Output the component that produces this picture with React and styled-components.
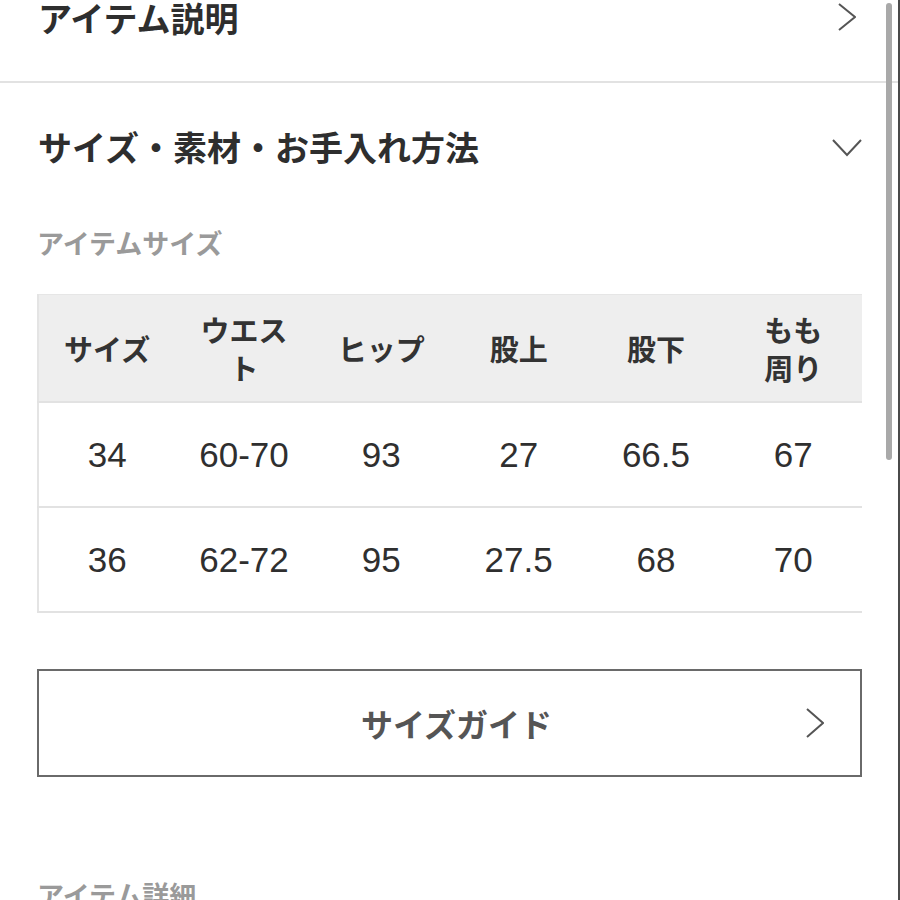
import React from "react";
import styled, { createGlobalStyle } from "styled-components";

const GlobalStyle = createGlobalStyle`
  html, body {
    margin: 0;
    padding: 0;
    background: #fff;
    overflow: hidden;
  }
  body {
    font-family: "Noto Sans CJK JP", sans-serif;
    color: #333;
  }
`;

const headers = [["サイズ"], ["ウエス", "ト"], ["ヒップ"], ["股上"], ["股下"], ["もも", "周り"]];

const rows = [
  ["34", "60-70", "93", "27", "66.5", "67"],
  ["36", "62-72", "95", "27.5", "68", "70"],
];

const ChevronRight = ({ w = 18, h = 28 }) => (
  <svg width={w} height={h} viewBox={`0 0 ${w} ${h}`} fill="none">
    <polyline
      points={`1,1 ${w - 1},${h / 2} 1,${h - 1}`}
      stroke="#555"
      strokeWidth="2"
      strokeLinejoin="miter"
    />
  </svg>
);

const ChevronDown = () => (
  <svg width="30" height="18" viewBox="0 0 30 18" fill="none">
    <polyline points="1,1 15,16 29,1" stroke="#555" strokeWidth="2" />
  </svg>
);

const App = () => {
  return (
    <>
      <GlobalStyle />
      <Page>
        <AccordionHeader divided>
          <AccordionTitle>アイテム説明</AccordionTitle>
          <IconBox right={44}>
            <ChevronRight />
          </IconBox>
        </AccordionHeader>
        <AccordionHeader>
          <AccordionTitle lift>サイズ・素材・お手入れ方法</AccordionTitle>
          <IconBox right={38}>
            <ChevronDown />
          </IconBox>
        </AccordionHeader>
        <Content>
          <SectionTitle>アイテムサイズ</SectionTitle>
          <TableWrap>
            <SizeTable>
              <thead>
                <tr>
                  {headers.map((lines, i) => (
                    <HeadCell key={i}>
                      {lines.map((line, j) => (
                        <React.Fragment key={j}>
                          {j > 0 && <br />}
                          {line}
                        </React.Fragment>
                      ))}
                    </HeadCell>
                  ))}
                </tr>
              </thead>
              <tbody>
                {rows.map((row, i) => (
                  <BodyRow key={i}>
                    {row.map((value, j) => (
                      <BodyCell key={j}>{value}</BodyCell>
                    ))}
                  </BodyRow>
                ))}
              </tbody>
            </SizeTable>
          </TableWrap>
          <GuideButton>
            <GuideLabel>サイズガイド</GuideLabel>
            <GuideIcon>
              <ChevronRight w={18} h={30} />
            </GuideIcon>
          </GuideButton>
          <DetailTitle>アイテム詳細</DetailTitle>
        </Content>
      </Page>
      <ScrollThumb />
      <FrameEdge />
    </>
  );
};

const Page = styled.div`
  margin-top: -47px;
  width: 900px;
`;

const AccordionHeader = styled.div`
  display: flex;
  align-items: center;
  justify-content: space-between;
  height: 130px;
  padding-left: 38px;
  box-sizing: border-box;
  border-bottom: ${({ divided }) => (divided ? "2px solid #e2e2e2" : "none")};
`;

const AccordionTitle = styled.span`
  font-size: 34px;
  font-weight: 700;
  color: #2e2e2e;
  margin-bottom: ${({ lift }) => (lift ? "4px" : "0")};
`;

const IconBox = styled.span`
  display: flex;
  margin-right: ${({ right }) => right}px;
`;

const Content = styled.div`
  padding: 14px 38px 0 37px;
`;

const SectionTitle = styled.h3`
  margin: 0;
  font-size: 27px;
  line-height: 32px;
  font-weight: 700;
  color: #9a9a9a;
`;

const DetailTitle = styled(SectionTitle)`
  margin-top: 102px;
`;

const TableWrap = styled.div`
  margin-top: 35px;
  width: 825px;
  overflow: hidden;
`;

const SizeTable = styled.table`
  width: 825px;
  table-layout: fixed;
  border-collapse: collapse;
  border-left: 2px solid #e4e4e4;
  border-top: 1px solid #e6e6e6;
`;

const HeadCell = styled.th`
  height: 106px;
  padding: 0;
  background: #eeeeee;
  font-size: 29px;
  line-height: 38px;
  font-weight: 700;
  color: #333;
  text-align: center;
  vertical-align: middle;
  border-bottom: 2px solid #e2e2e2;
`;

const BodyRow = styled.tr`
  border-bottom: 2px solid #e2e2e2;
`;

const BodyCell = styled.td`
  height: 103px;
  padding: 0;
  text-align: center;
  vertical-align: middle;
  font-family: "Liberation Sans", "Noto Sans CJK JP", sans-serif;
  font-size: 35px;
  color: #2f2f2f;
`;

const GuideButton = styled.div`
  position: relative;
  display: flex;
  align-items: center;
  justify-content: center;
  margin-top: 56px;
  width: 825px;
  height: 108px;
  padding-left: 14px;
  box-sizing: border-box;
  border: 2px solid #6a6a6a;
`;

const GuideLabel = styled.span`
  font-size: 32px;
  font-weight: 700;
  color: #555;
`;

const GuideIcon = styled.span`
  position: absolute;
  right: 36px;
  top: 50%;
  transform: translateY(-50%);
  display: flex;
`;

const ScrollThumb = styled.div`
  position: fixed;
  top: 3px;
  left: 886px;
  width: 6px;
  height: 457px;
  border-radius: 3px;
  background: #a9a9a9;
`;

const FrameEdge = styled.div`
  position: fixed;
  top: 0;
  right: 0;
  width: 2px;
  height: 900px;
  background: #4a4a4a;
`;

export default App;
